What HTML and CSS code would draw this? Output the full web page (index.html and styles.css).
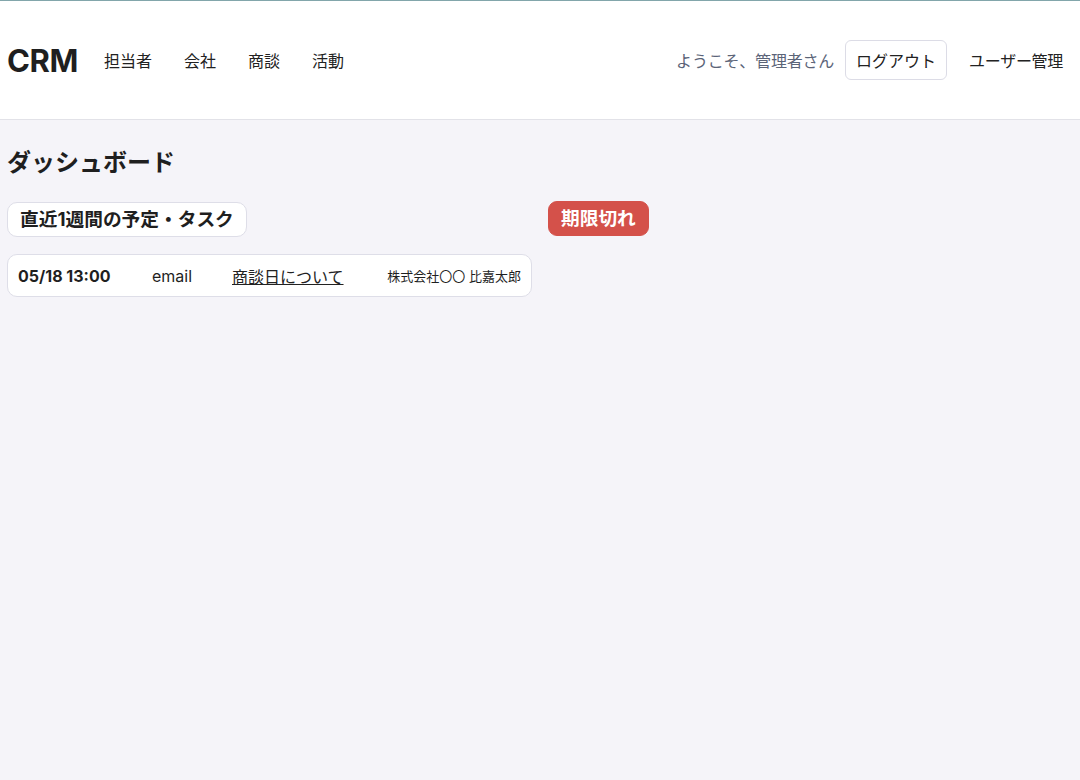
FILE: index.html
```html
<!DOCTYPE html>
<html lang="ja">
<head>
  <meta charset="UTF-8" />
  <meta name="viewport" content="width=device-width, initial-scale=1.0"/>
  <title>CRM</title>
  <link rel="stylesheet" href="styles.css">
</head>
<body>
  <header class="topbar">
    <div class="brand">CRM</div>
    <nav class="nav">
      <a href="#">担当者</a>
      <a href="#">会社</a>
      <a href="#">商談</a>
      <a href="#">活動</a>
    </nav>
    <div class="user">
      <span class="welcome">ようこそ、管理者さん</span>
      <button class="logout">ログアウト</button>
      <a href="#" class="admin">ユーザー管理</a>
    </div>
  </header>
  <main class="content">
    <h2 class="page-title">ダッシュボード</h2>
    <div class="columns">
      <section>
        <h3 class="section-title">直近1週間の予定・タスク</h3>
        <ul class="tasks" id="tasks">
          <!-- 予定がここに入る -->
        </ul>
      </section>
      <section>
        <h3 class="section-title overdue">期限切れ</h3>
      </section>
    </div>
  </main>

  <script>
    const tasks = [
      { date: "05/18 13:00", type: "email", title: "商談日について", who: "株式会社〇〇 比嘉太郎" }
    ];

    const list = document.getElementById("tasks");
    tasks.forEach(t => {
      const li = document.createElement("li");
      li.className = "task";
      li.innerHTML = `
        <span class="task-date">${t.date}</span>
        <span class="task-type">${t.type}</span>
        <a href="#" class="task-title">${t.title}</a>
        <span class="task-who">${t.who}</span>
      `;
      list.appendChild(li);
    });
  </script>
</body>
</html>
```

FILE: styles.css
```css
body {
  margin: 0;
  font-family: Inter, "Noto Sans CJK JP", sans-serif;
  font-size: 16px;
  background-color: #f5f4f9;
  color: #1f1f1f;
}
.topbar {
  display: flex;
  align-items: center;
  height: 118px;
  padding: 0 17px 0 7px;
  background-color: white;
  border-top: 1px solid #82a6ab;
  border-bottom: 1px solid #e2e2e8;
}
.brand {
  font-size: 31px;
  font-weight: 700;
  letter-spacing: -0.4px;
  margin-right: 26px;
}
.nav {
  display: flex;
  gap: 32px;
}
.nav a {
  color: #222;
  text-decoration: none;
}
.user {
  margin-left: auto;
  display: flex;
  align-items: center;
}
.welcome {
  color: #5b6478;
  letter-spacing: -0.2px;
  margin-right: 11px;
}
.logout {
  font-family: inherit;
  font-size: 16px;
  color: #222;
  background: white;
  border: 1px solid #dcdce6;
  border-radius: 6px;
  height: 40px;
  padding: 0 10px;
  margin-right: 22px;
}
.admin {
  color: #222;
  letter-spacing: -0.3px;
  text-decoration: none;
}
.content {
  padding: 27px 7px;
}
.page-title {
  margin: 0 0 23px;
  font-size: 24px;
  line-height: 32px;
  font-weight: 700;
}
.columns {
  display: grid;
  grid-template-columns: 1fr 1fr;
  gap: 16px;
}
.section-title {
  display: inline-block;
  margin: 0 0 17px;
  padding: 4px 12px;
  font-size: 18.72px;
  line-height: 25px;
  font-weight: 700;
  background: white;
  border: 1px solid #dedee8;
  border-radius: 10px;
}
.section-title.overdue {
  margin-top: -1px;
  background: #d4514a;
  border-color: #d4514a;
  color: white;
  border-radius: 9px;
}
.tasks {
  list-style: none;
  margin: 0;
  padding: 0;
}
.task {
  display: flex;
  align-items: center;
  height: 41px;
  padding: 0 10px;
  background: white;
  border: 1px solid #dedee8;
  border-radius: 10px;
}
.task-date {
  font-weight: 700;
  width: 134px;
}
.task-type {
  width: 80px;
}
.task-title {
  color: #222;
}
.task-who {
  margin-left: auto;
  font-size: 13px;
}
```
